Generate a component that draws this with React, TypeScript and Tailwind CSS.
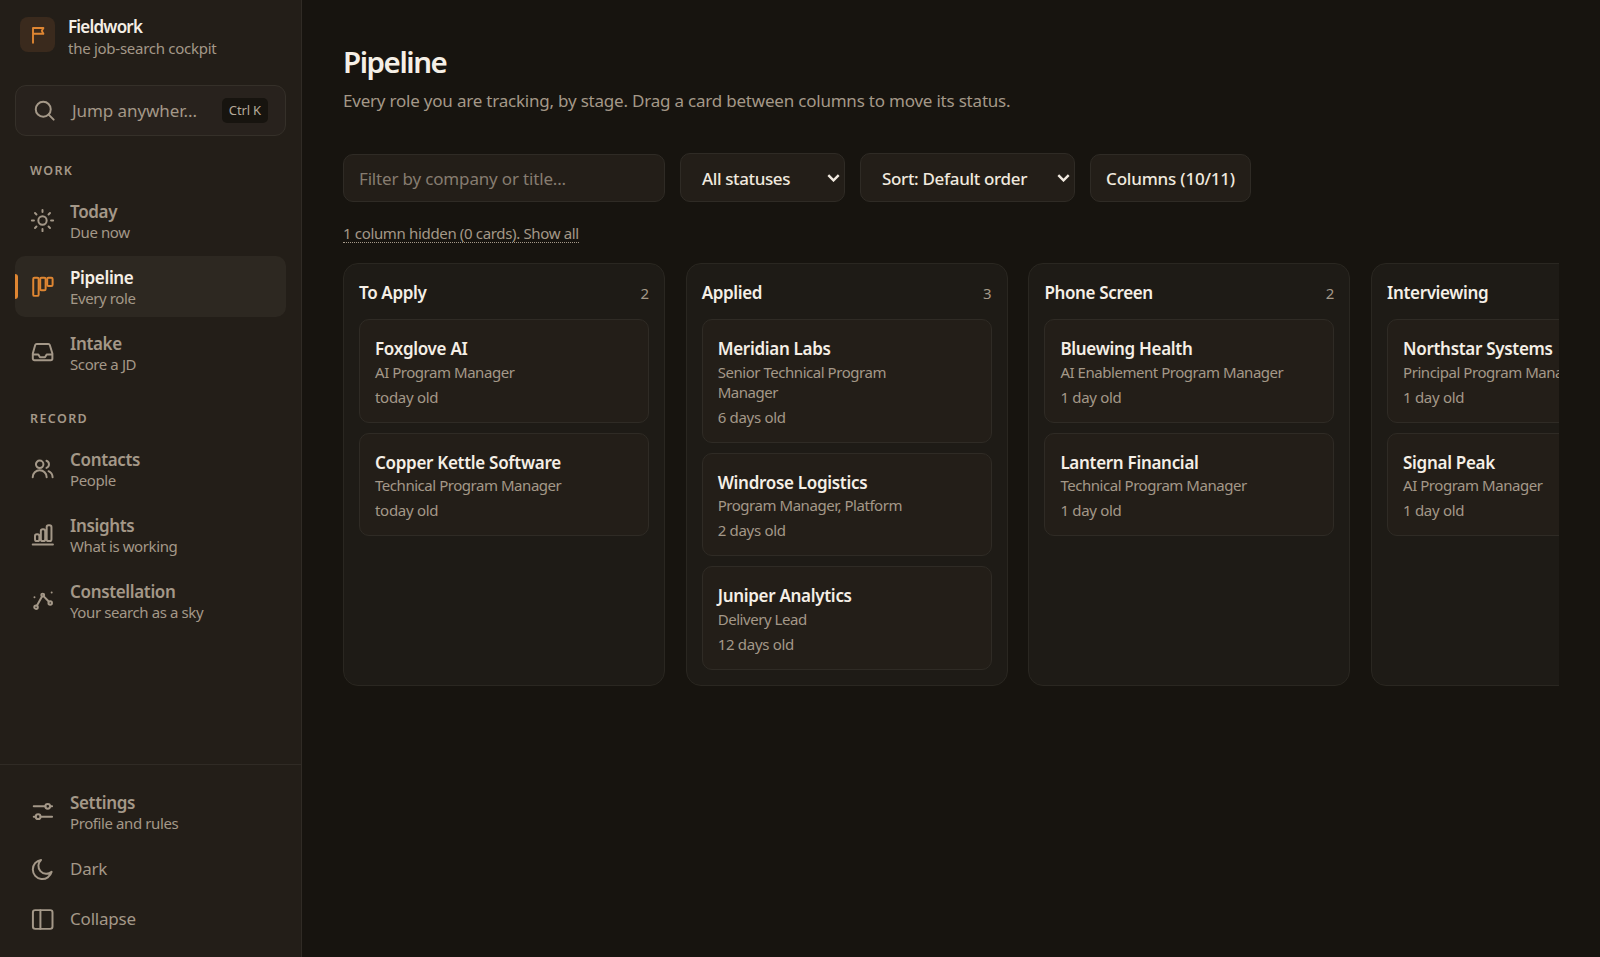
import type { ReactNode } from 'react';
import clsx from 'clsx';

const icons: Record<string, ReactNode> = {
  today: (
    <>
      <circle cx="12" cy="12" r="4" />
      <path d="M12 1.8v2M12 20.2v2M1.8 12h2M20.2 12h2M4.8 4.8l1.4 1.4M17.8 17.8l1.4 1.4M4.8 19.2l1.4-1.4M17.8 6.2l1.4-1.4" />
    </>
  ),
  pipeline: (
    <>
      <rect x="3.1" y="3.7" width="5.2" height="17.3" rx="1.2" />
      <rect x="9.8" y="3.7" width="5.2" height="11.8" rx="1.2" />
      <rect x="16.5" y="3.7" width="5.2" height="7.8" rx="1.2" />
    </>
  ),
  intake: (
    <path d="M3 14h5l1.6 2.6h4.8L16 14h5M6.4 3.8h11.2a1.5 1.5 0 0 1 1.4 1L21.5 13v4.8a1.6 1.6 0 0 1-1.6 1.6H4.3a1.6 1.6 0 0 1-1.6-1.6V13L5 4.8a1.5 1.5 0 0 1 1.4-1z" />
  ),
  contacts: (
    <>
      <circle cx="9.3" cy="8" r="3.6" />
      <path d="M2.6 20.4a6.7 6.7 0 0 1 13.4 0M15.8 4.6a3.6 3.6 0 0 1 0 6.8M17.8 14.6a6.6 6.6 0 0 1 3.9 5.8" />
    </>
  ),
  insights: (
    <>
      <path d="M2.6 21.5h19.4" />
      <rect x="4.8" y="11.7" width="4.2" height="6.6" rx="1.8" />
      <rect x="10.4" y="6.9" width="4.2" height="11.4" rx="1.8" />
      <rect x="16" y="3.2" width="4.6" height="15.1" rx="1.8" />
    </>
  ),
  constellation: (
    <>
      <circle cx="5.8" cy="18.4" r="1.7" />
      <circle cx="12.2" cy="6.8" r="1.4" />
      <circle cx="19.4" cy="14.4" r="1.7" />
      <path d="M6.7 16.8l4.8-8.6M13.2 8l4.8 5M4.3 8.8h.01M20.8 4.4h.01" />
    </>
  ),
  settings: (
    <>
      <path d="M3.6 7h11.2M19.4 7h1.8M3.6 17h1.8M10.2 17h11" />
      <circle cx="17" cy="7" r="2.3" />
      <circle cx="7.8" cy="17" r="2.3" />
    </>
  ),
  dark: <path d="M20.8 14.2A9.2 9.2 0 1 1 10.6 2.8a7.3 7.3 0 0 0 10.2 11.4z" />,
  collapse: (
    <>
      <rect x="2.8" y="3" width="18.8" height="18" rx="2.2" />
      <path d="M10 3v18" />
    </>
  ),
  search: (
    <>
      <circle cx="10.8" cy="10.8" r="7.2" />
      <path d="M20.8 20.8l-4.8-4.8" />
    </>
  ),
};

function Icon({ name }: { name: string }) {
  return (
    <svg
      className="size-[25px] shrink-0"
      viewBox="0 0 24 24"
      fill="none"
      stroke="currentColor"
      strokeWidth={1.9}
      strokeLinecap="round"
      strokeLinejoin="round"
    >
      {icons[name]}
    </svg>
  );
}

const work = [
  { icon: 'today', title: 'Today', hint: 'Due now' },
  { icon: 'pipeline', title: 'Pipeline', hint: 'Every role', active: true },
  { icon: 'intake', title: 'Intake', hint: 'Score a JD' },
];

const record = [
  { icon: 'contacts', title: 'Contacts', hint: 'People' },
  { icon: 'insights', title: 'Insights', hint: 'What is working' },
  { icon: 'constellation', title: 'Constellation', hint: 'Your search as a sky' },
];

const columns = [
  {
    name: 'To Apply',
    cards: [
      { company: 'Foxglove AI', role: 'AI Program Manager', age: 'today old' },
      { company: 'Copper Kettle Software', role: 'Technical Program Manager', age: 'today old' },
    ],
  },
  {
    name: 'Applied',
    cards: [
      { company: 'Meridian Labs', role: 'Senior Technical Program Manager', age: '6 days old' },
      { company: 'Windrose Logistics', role: 'Program Manager, Platform', age: '2 days old' },
      { company: 'Juniper Analytics', role: 'Delivery Lead', age: '12 days old' },
    ],
  },
  {
    name: 'Phone Screen',
    cards: [
      { company: 'Bluewing Health', role: 'AI Enablement Program Manager', age: '1 day old' },
      { company: 'Lantern Financial', role: 'Technical Program Manager', age: '1 day old' },
    ],
  },
  {
    name: 'Interviewing',
    cards: [
      { company: 'Northstar Systems', role: 'Principal Program Manager', age: '1 day old' },
      { company: 'Signal Peak', role: 'AI Program Manager', age: '1 day old' },
    ],
  },
];

type NavItem = { icon: string; title: string; hint: string; active?: boolean };

function NavLink({ item }: { item: NavItem }) {
  return (
    <a
      className={clsx(
        'relative flex h-[61px] items-center gap-[15px] rounded-[10px] px-[15px]',
        item.active ? 'bg-[#2d2821] text-[#df8632]' : 'text-[#a49888]'
      )}
    >
      {item.active && <span className="absolute left-0 top-[18px] h-[25px] w-[3px] rounded-r-sm bg-[#df8632]" />}
      <Icon name={item.icon} />
      <span className="flex flex-col pt-[2px]">
        <span
          className={clsx(
            'text-[17px] leading-5 font-semibold tracking-[-0.35px]',
            item.active ? 'text-[#f5efe6]' : 'text-[#a49888]'
          )}
        >
          {item.title}
        </span>
        <span className="text-[15px] leading-5 tracking-[-0.4px] text-[#a49888]">{item.hint}</span>
      </span>
    </a>
  );
}

function Select({ label, className }: { label: string; className: string }) {
  return (
    <button
      className={clsx(
        'flex h-[49px] items-center justify-between rounded-[10px] border border-[#2f2b25] bg-[#231e18] pt-[2px] pl-[21px] pr-[4px] text-[17px] font-medium text-[#f0e9df]',
        className
      )}
    >
      {label}
      <svg className="mb-[2px] h-[8px] w-[13px]" viewBox="0 0 13 8" fill="none" stroke="currentColor" strokeWidth={2.4}>
        <path d="M1.3 1.2l5.2 5.2 5.2-5.2" />
      </svg>
    </button>
  );
}

function Sidebar() {
  return (
    <aside className="flex w-[302px] shrink-0 flex-col border-r border-[#302b25] bg-[#231e18]">
      <div className="flex h-[69px] items-center gap-[13px] pl-5">
        <div className="flex size-[35px] items-center justify-center rounded-[8px] bg-[#3a2a1d]">
          <svg className="h-[18px] w-[14px]" viewBox="0 0 14 18" fill="none" stroke="#df8632" strokeWidth={1.9}>
            <path d="M2 16.8V2h10.4l-1.6 2.9 1.6 2.9H2" strokeLinejoin="round" strokeLinecap="round" />
          </svg>
        </div>
        <div className="pt-[5px]">
          <div className="text-[17px] leading-[22px] font-semibold tracking-[-0.8px] text-[#f5efe6]">Fieldwork</div>
          <div className="text-[15px] leading-[21px] tracking-[-0.27px] text-[#a49888]">the job-search cockpit</div>
        </div>
      </div>

      <div className="px-[15px] pt-4">
        <button className="flex h-[51px] w-full items-center rounded-[11px] border border-[#353029] bg-[#28221d] pl-4 pr-[17px] text-[#a49888]">
          <Icon name="search" />
          <span className="ml-[15px] text-[17px] tracking-[-0.08px]">Jump anywher...</span>
          <kbd className="ml-auto rounded-[5px] bg-[#17140f] px-[7px] font-['Noto_Sans',sans-serif] text-[13px] leading-[25px] tracking-[-0.15px] text-[#b5a999]">
            Ctrl K
          </kbd>
        </button>
      </div>

      <nav className="flex grow flex-col gap-[5px] px-[15px]">
        <h2 className="pt-[26px] pb-[6px] pl-[15px] text-[12.5px] leading-[17px] font-semibold tracking-[1.4px] text-[#a49888]">WORK</h2>
        {work.map((item) => (
          <NavLink key={item.title} item={item} />
        ))}
        <h2 className="pt-[22px] pb-[6px] pl-[15px] text-[12.5px] leading-[17px] font-semibold tracking-[1.4px] text-[#a49888]">RECORD</h2>
        {record.map((item) => (
          <NavLink key={item.title} item={item} />
        ))}
      </nav>

      <div className="h-[193px] border-t border-[#302b25] px-[15px] pt-4 text-[#a49888]">
        <NavLink item={{ icon: 'settings', title: 'Settings', hint: 'Profile and rules' }} />
        <button className="mt-[2px] flex h-[50px] items-center gap-[15px] pl-[15px] text-[17px] tracking-[-0.2px]">
          <Icon name="dark" />
          Dark
        </button>
        <button className="flex h-[50px] items-center gap-[15px] pl-[15px] text-[17px] tracking-[-0.2px]">
          <Icon name="collapse" />
          Collapse
        </button>
      </div>
    </aside>
  );
}

export default function App() {
  return (
    <div className="flex h-[957px] overflow-hidden bg-[#17140f] font-['Noto_Sans',sans-serif] text-[#f5efe6]">
      <Sidebar />

      <main className="min-w-0 grow px-[41px] pt-[42px]">
        <h1 className="text-[29.5px] leading-[40px] font-semibold tracking-[-1.45px]">Pipeline</h1>
        <p className="mt-[6px] text-[17px] leading-[25px] tracking-[-0.21px] text-[#a49888]">
          Every role you are tracking, by stage. Drag a card between columns to move its status.
        </p>

        {/* Toolbar */}
        <div className="mt-[40px] flex items-end gap-[15px]">
          <div className="flex h-[48px] w-[322px] items-center rounded-[10px] border border-[#2f2b25] bg-[#231e18] px-[15px] pt-[2px] text-[17px] tracking-[-0.17px] text-[#867c70]">
            Filter by company or title...
          </div>
          <Select label="All statuses" className="w-[165px] tracking-[-0.38px]" />
          <Select label="Sort: Default order" className="w-[215px] tracking-[-0.33px]" />
          <button className="h-[48px] w-[161px] rounded-[10px] border border-[#2f2b25] bg-[#231e18] pt-[2px] text-[17px] font-medium tracking-[-0.2px] text-[#f0e9df]">
            Columns (10/11)
          </button>
        </div>

        <div className="mt-[22px] flex">
          <button className="border-b border-dotted border-[#a49888] text-[15px] leading-[18px] tracking-[-0.34px] text-[#a49888]">
            1 column hidden (0 cards). Show all
          </button>
        </div>

        {/* Board */}
        <div className="mt-5 flex gap-[20.7px] overflow-hidden">
          {columns.map((column) => (
            <section
              key={column.name}
              className="w-[322px] shrink-0 rounded-[15px] border border-[#2a2721] bg-[#1e1b16] px-[15px] pt-[16px] pb-[15px]"
            >
              <div className="flex items-center justify-between">
                <h3 className="text-[17px] leading-[26px] font-semibold tracking-[-0.35px]">{column.name}</h3>
                <span className="text-[15px] leading-6 text-[#a49888]">{column.cards.length}</span>
              </div>
              <div className="mt-[13px] flex flex-col gap-[10px]">
                {column.cards.map((card) => (
                  <article
                    key={card.company}
                    className="rounded-[10px] border border-[#2f2b25] bg-[#231e18] px-[15px] pt-[17px] pb-[15px] text-[15px] leading-5 tracking-[-0.46px] text-[#a49888]"
                  >
                    <h4 className="text-[17px] leading-[24px] font-semibold tracking-[-0.3px] text-[#f5efe6]">{card.company}</h4>
                    <p className="mt-[0.5px] max-w-[230px]">{card.role}</p>
                    <p className="mt-[5px] tracking-[-0.3px]">{card.age}</p>
                  </article>
                ))}
              </div>
            </section>
          ))}
        </div>
      </main>
    </div>
  );
}
